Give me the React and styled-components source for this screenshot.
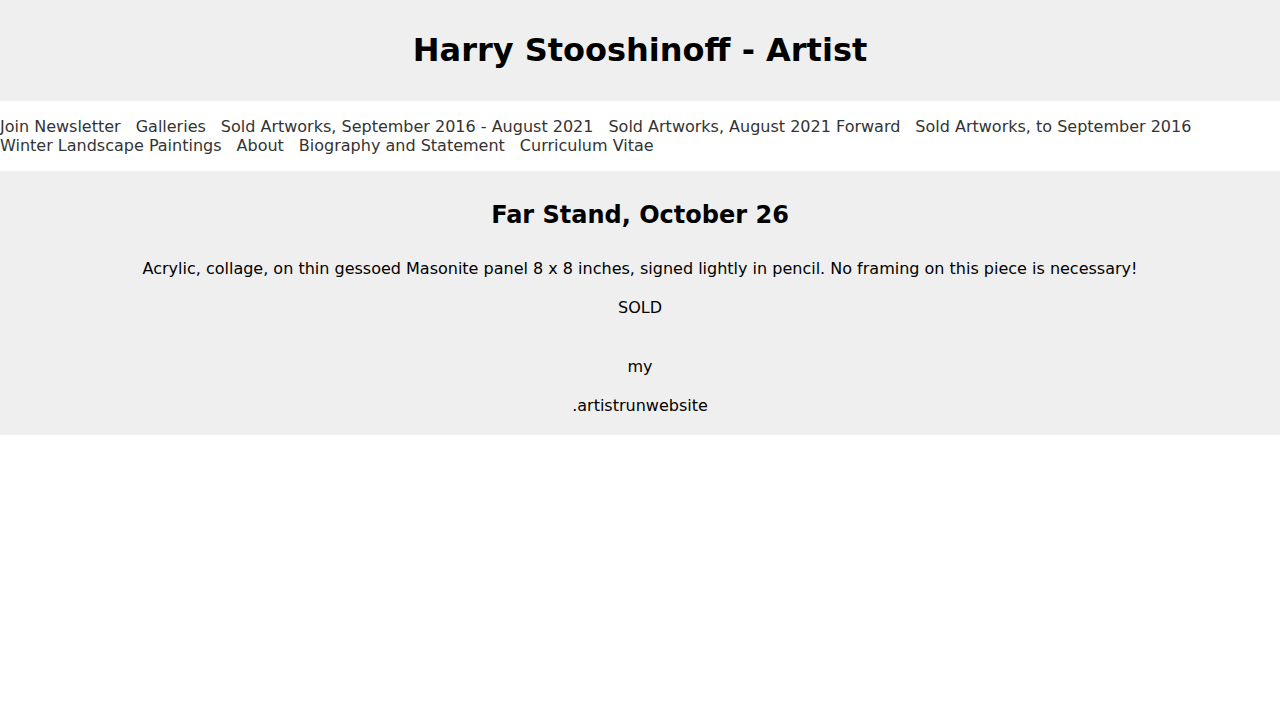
import React from 'react';
import styled, { createGlobalStyle } from 'styled-components';

const GlobalStyle = createGlobalStyle`
    body {
        margin: 0;
        background: #ffffff;
        font-family: "DejaVu Sans", "Liberation Sans", sans-serif;
        color: #000;
    }
`

const links = [
    'Join Newsletter',
    'Galleries',
    'Sold Artworks, September 2016 - August 2021',
    'Sold Artworks, August 2021 Forward',
    'Sold Artworks, to September 2016',
    'Winter Landscape Paintings',
    'About',
    'Biography and Statement',
    'Curriculum Vitae',
]

const App = () => {
    return (
        <>
            <GlobalStyle />
            <Header>
                <Title>Harry Stooshinoff - Artist</Title>
            </Header>
            <Nav>
                {links.map(link => (
                    <NavLink href="#" key={link}>{link}</NavLink>
                ))}
            </Nav>
            <Main>
                <ArtTitle>Far Stand, October 26</ArtTitle>
                <Para>Acrylic, collage, on thin gessoed Masonite panel 8 x 8 inches, signed lightly in pencil. No framing on this piece is necessary!</Para>
                <Para>SOLD</Para>
                <Para $gap>my</Para>
                <Para>.artistrunwebsite</Para>
            </Main>
        </>
    );
};

export default App;

const Header = styled.header`
    background-color: #efefef;
    height: 101px;
    display: flex;
    align-items: center;
    justify-content: center;
`

const Title = styled.h1`
    margin: 0;
    font-size: 32px;
    line-height: 37px;
    font-weight: bold;
`

const Nav = styled.nav`
    display: flex;
    flex-wrap: wrap;
    column-gap: 15px;
    padding: 16px 0;
    font-size: 16px;
    line-height: 19px;
`

const NavLink = styled.a`
    color: #333;
    text-decoration: none;
    white-space: nowrap;
`

const Main = styled.main`
    background-color: #efefef;
    padding: 30px 20px 18px;
    text-align: center;
`

const ArtTitle = styled.h2`
    margin: 0 0 28px;
    font-size: 24px;
    line-height: 28px;
    font-weight: bold;
`

const Para = styled.p`
    margin: ${p => p.$gap ? '36px' : '0'} 0 16px;
    font-size: 16px;
    line-height: 23px;
    &:last-child {
        margin-bottom: 0;
    }
`
